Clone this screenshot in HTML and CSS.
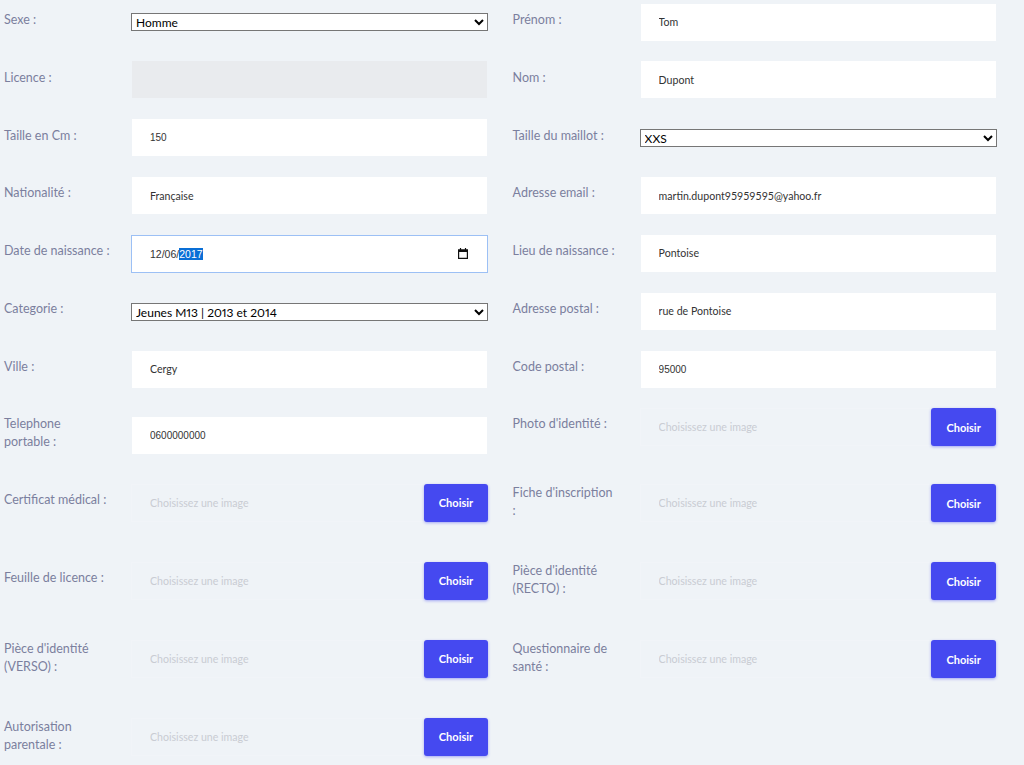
FILE: index.html
```html
<!DOCTYPE html>
<html lang="fr">
<head>
<meta charset="utf-8">
<title>Formulaire</title>
<link rel="stylesheet" href="styles.css">
</head>
<body>
<form class="form">
  <div class="col">
    <div class="row"><label class="lbl">Sexe :</label><select class="sel"><option>Homme</option></select></div>
    <div class="row"><label class="lbl">Licence :</label><input class="inp disabled" disabled></div>
    <div class="row"><label class="lbl">Taille en Cm :</label><input class="inp num" value="150"></div>
    <div class="row"><label class="lbl">Nationalité :</label><input class="inp" value="Française"></div>
    <div class="row"><label class="lbl">Date de naissance :</label>
      <div class="inp date num"><span>12/06/<span class="hl">2017</span></span>
        <svg class="cal" width="10" height="11" viewBox="0 0 10 11"><path d="M.6 2h8.8v8.4H.6z" fill="none" stroke="#111" stroke-width="1.2"/><rect x="0" y="1.5" width="10" height="2.5" fill="#111"/><path d="M2.5 0v2M7.5 0v2" stroke="#111" stroke-width="1.2"/></svg>
      </div>
    </div>
    <div class="row"><label class="lbl">Categorie :</label><select class="sel"><option>Jeunes M13 | 2013 et 2014</option></select></div>
    <div class="row"><label class="lbl">Ville :</label><input class="inp" value="Cergy"></div>
    <div class="row"><label class="lbl">Telephone<br>portable :</label><input class="inp num" value="0600000000"></div>
    <div class="row file"><label class="lbl">Certificat médical :</label><div class="picker"><input class="fake" placeholder="Choisissez une image"><button type="button" class="btn">Choisir</button></div></div>
    <div class="row file"><label class="lbl">Feuille de licence :</label><div class="picker"><input class="fake" placeholder="Choisissez une image"><button type="button" class="btn">Choisir</button></div></div>
    <div class="row file"><label class="lbl two">Pièce d'identité (VERSO) :</label><div class="picker"><input class="fake" placeholder="Choisissez une image"><button type="button" class="btn">Choisir</button></div></div>
    <div class="row file"><label class="lbl two">Autorisation parentale :</label><div class="picker"><input class="fake" placeholder="Choisissez une image"><button type="button" class="btn">Choisir</button></div></div>
  </div>
  <div class="col">
    <div class="row"><label class="lbl">Prénom :</label><input class="inp" value="Tom"></div>
    <div class="row"><label class="lbl">Nom :</label><input class="inp" value="Dupont"></div>
    <div class="row"><label class="lbl">Taille du maillot :</label><select class="sel"><option>XXS</option></select></div>
    <div class="row"><label class="lbl">Adresse email :</label><input class="inp" value="martin.dupont95959595@yahoo.fr"></div>
    <div class="row"><label class="lbl">Lieu de naissance :</label><input class="inp" value="Pontoise"></div>
    <div class="row"><label class="lbl">Adresse postal :</label><input class="inp" value="rue de Pontoise"></div>
    <div class="row"><label class="lbl">Code postal :</label><input class="inp num" value="95000"></div>
    <div class="row file short"><label class="lbl">Photo d'identité :</label><div class="picker"><input class="fake" placeholder="Choisissez une image"><button type="button" class="btn">Choisir</button></div></div>
    <div class="row file"><label class="lbl two">Fiche d'inscription<br>:</label><div class="picker"><input class="fake" placeholder="Choisissez une image"><button type="button" class="btn">Choisir</button></div></div>
    <div class="row file"><label class="lbl two">Pièce d'identité (RECTO) :</label><div class="picker"><input class="fake" placeholder="Choisissez une image"><button type="button" class="btn">Choisir</button></div></div>
    <div class="row file"><label class="lbl two">Questionnaire de santé :</label><div class="picker"><input class="fake" placeholder="Choisissez une image"><button type="button" class="btn">Choisir</button></div></div>
  </div>
</form>
</body>
</html>
```
FILE: styles.css
```css
* { box-sizing: border-box; }
html, body { margin: 0; height: 100%; overflow: hidden; }
body { background: #eff3f7; font-family: Lato, sans-serif; }
.form { display: grid; grid-template-columns: 508.6px 515.4px; padding-top: 3.5px; }
.col { display: flex; flex-direction: column; padding-left: 4px; }
.row { display: grid; grid-template-columns: 127px 357px; align-items: center; min-height: 37.85px; margin-bottom: 20px; }
.lbl { padding: 7px 20px 12.15px 0; font-size: 12.5px; line-height: 18px; color: #7b7f9e; }
.two { padding-top: 0; padding-bottom: 0; }
.inp { display: flex; align-items: center; justify-content: space-between; width: 100%; height: 37px; margin-bottom: .85px; padding: 0 18px; border: solid #eff3f7; border-width: 0 1px; background: #fff; color: #333; font: 10.6px Lato, sans-serif; outline: none; }
.disabled { background: #e9ebee; }
.num { font-family: "Liberation Sans", sans-serif; font-size: 10px; }
.date { border: 1px solid #9cc0f5; height: 37.85px; margin-bottom: 0; font-size: 10.5px; }
.hl { background: #0a6fd6; color: #fff; }
.cal { display: block; margin-right: 1px; }
.sel { width: 100%; height: 18px; padding: 0; background: #fff; color: #000; border: 1px solid #767676; border-radius: 0; font: 12px Lato, sans-serif; font-variant-numeric: proportional-nums; }
.file { align-items: start; min-height: 58px; }
.short { min-height: 56px; }
.picker { display: flex; width: 100%; height: 38px; }
.col + .col .picker { width: 356.5px; }
.fake { flex: 1; min-width: 0; padding: 0 18px; background: transparent; border: 1px solid #f1f4f8; border-right: 0; font: 10.6px Lato, sans-serif; outline: none; }
.fake::placeholder { color: #c9ccd3; opacity: 1; }
.btn { width: 64px; height: 38px; padding: 0; border: 0; border-radius: 3px; background: #4549f0; color: #fff; font: 700 11px Lato, sans-serif; box-shadow: 0 1px 3px rgba(69,73,240,.45); }
.col + .col .btn { width: 65px; }
```
